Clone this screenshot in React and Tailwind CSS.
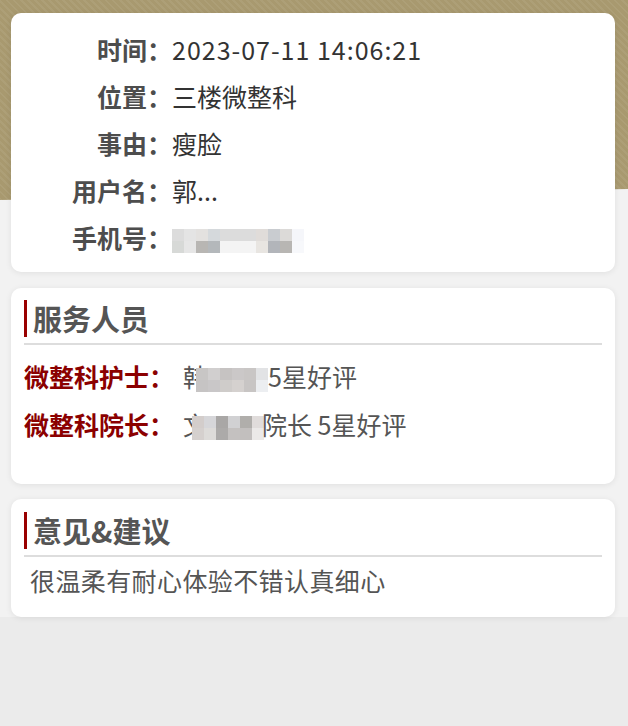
import React from 'react';

const info = [
  { label: '时间', value: '2023-07-11 14:06:21', wide: true },
  { label: '位置', value: '三楼微整科' },
  { label: '事由', value: '瘦脸' },
  { label: '用户名', value: '郭...' },
  { label: '手机号', value: null },
];

// mosaic blocks (blurred private data)
const phoneMosaic = [
  ['#dcdcdc', '#e4e4e4', '#e3e1df', '#d5d9dc', '#dcdcdc', '#dcdcdc', '#dcdcdc', '#e0dcd9', '#c9ccd0', '#dcdad8', '#f5f6fa'],
  ['#d7d9d7', '#e6e6e6', '#b8b6b3', '#b4b8bb', '#f4f4f4', '#f4f4f4', '#f4f4f4', '#e8e5e1', '#b2b5ba', '#b8b6b3', '#f7f8fb'],
];
const nurseMosaic = [
  ['#c8c6c5', '#d1cfcf', '#c6c3c2', '#cbc8c8', '#c9c6c5', '#e2e3e5'],
  ['#c6c4c4', '#c9c7c8', '#cfccca', '#d5d1cf', '#c8c5c4', '#eceef1'],
];
const deanMosaic = [
  ['#d3cdcb', '#d6d6d9', '#a9a7a6', '#d1d1d3', '#b0aeab', '#e0dcdb'],
  ['#d5d0ce', '#dddbd9', '#acaaa9', '#c4c1c0', '#c2bfbe', '#ebe9e8'],
];

const Mosaic = ({ rows }) => (
  <span className="inline-flex flex-col align-middle">
    {rows.map((row, i) => (
      <span key={i} className="flex">
        {row.map((c, j) => (
          <span key={j} className="w-[12px] h-[12px]" style={{ backgroundColor: c }} />
        ))}
      </span>
    ))}
  </span>
);

const SectionTitle = ({ children }) => (
  <div className="border-b-2 border-[#dddddd] pb-[6px]">
    <div className="border-l-[3px] border-[#990000] pl-[6px] h-[37px] flex items-center text-[29px] font-bold text-[#555555] leading-none">
      {children}
    </div>
  </div>
);

const App = () => {
  return (
    <div
      className="min-h-[726px] bg-[#ebebeb] text-[25px]"
      style={{ fontFamily: '"Noto Sans CJK SC", "Noto Sans", sans-serif' }}
    >
      <div className="relative bg-[#f2f2f2] pl-[11px] pr-[13px] pt-[13px]">
        <div className="absolute inset-x-0 top-0 h-[200px] bg-[#a8996f] bg-[repeating-linear-gradient(45deg,rgba(255,255,255,0.06)_0px,rgba(255,255,255,0.06)_2px,transparent_2px,transparent_5px)] [clip-path:polygon(0_0,100%_0,100%_189px,0_200px)]" />

        <div className="relative flex flex-col">
          <div className="bg-white rounded-[10px] shadow-[0_1px_6px_rgba(0,0,0,0.08)] pt-[13px] pb-[11px]">
            {info.map((row) => (
              <div key={row.label} className="flex items-center h-[47px]">
                <div className="w-[161px] text-right font-bold text-[#4d4d4d]">{row.label}：</div>
                <div className={row.wide ? 'text-[#333333] tracking-[1px]' : 'text-[#333333]'}>
                  {row.value ? row.value : <Mosaic rows={phoneMosaic} />}
                </div>
              </div>
            ))}
          </div>

          <div className="mt-[16px] bg-white rounded-[10px] shadow-[0_1px_6px_rgba(0,0,0,0.08)] px-[13px] pt-[12px] pb-[35px]">
            <SectionTitle>服务人员</SectionTitle>
            <div className="mt-[8px]">
              <div className="flex items-center h-[48px]">
                <span className="w-[159px] font-bold text-[#8b0000]">微整科护士：</span>
                <span className="text-[#555555] flex items-center">
                  韩<span className="-ml-[12px]"><Mosaic rows={nurseMosaic} /></span>
                  <span>5星好评</span>
                </span>
              </div>
              <div className="flex items-center h-[48px]">
                <span className="w-[159px] font-bold text-[#8b0000]">微整科院长：</span>
                <span className="text-[#555555] flex items-center">
                  文<span className="-ml-[16px]"><Mosaic rows={deanMosaic} /></span>
                  <span className="-ml-[2px]">院长 5星好评</span>
                </span>
              </div>
            </div>
          </div>

          <div className="mt-[15px] bg-white rounded-[10px] shadow-[0_1px_6px_rgba(0,0,0,0.08)] px-[13px] pt-[13px] pb-[12px]">
            <SectionTitle>意见&amp;建议</SectionTitle>
            <div className="pl-[6px] h-[48px] flex items-center text-[#555555] tracking-[0.4px]">
              很温柔有耐心体验不错认真细心
            </div>
          </div>
        </div>
      </div>
    </div>
  );
};

export default App;
